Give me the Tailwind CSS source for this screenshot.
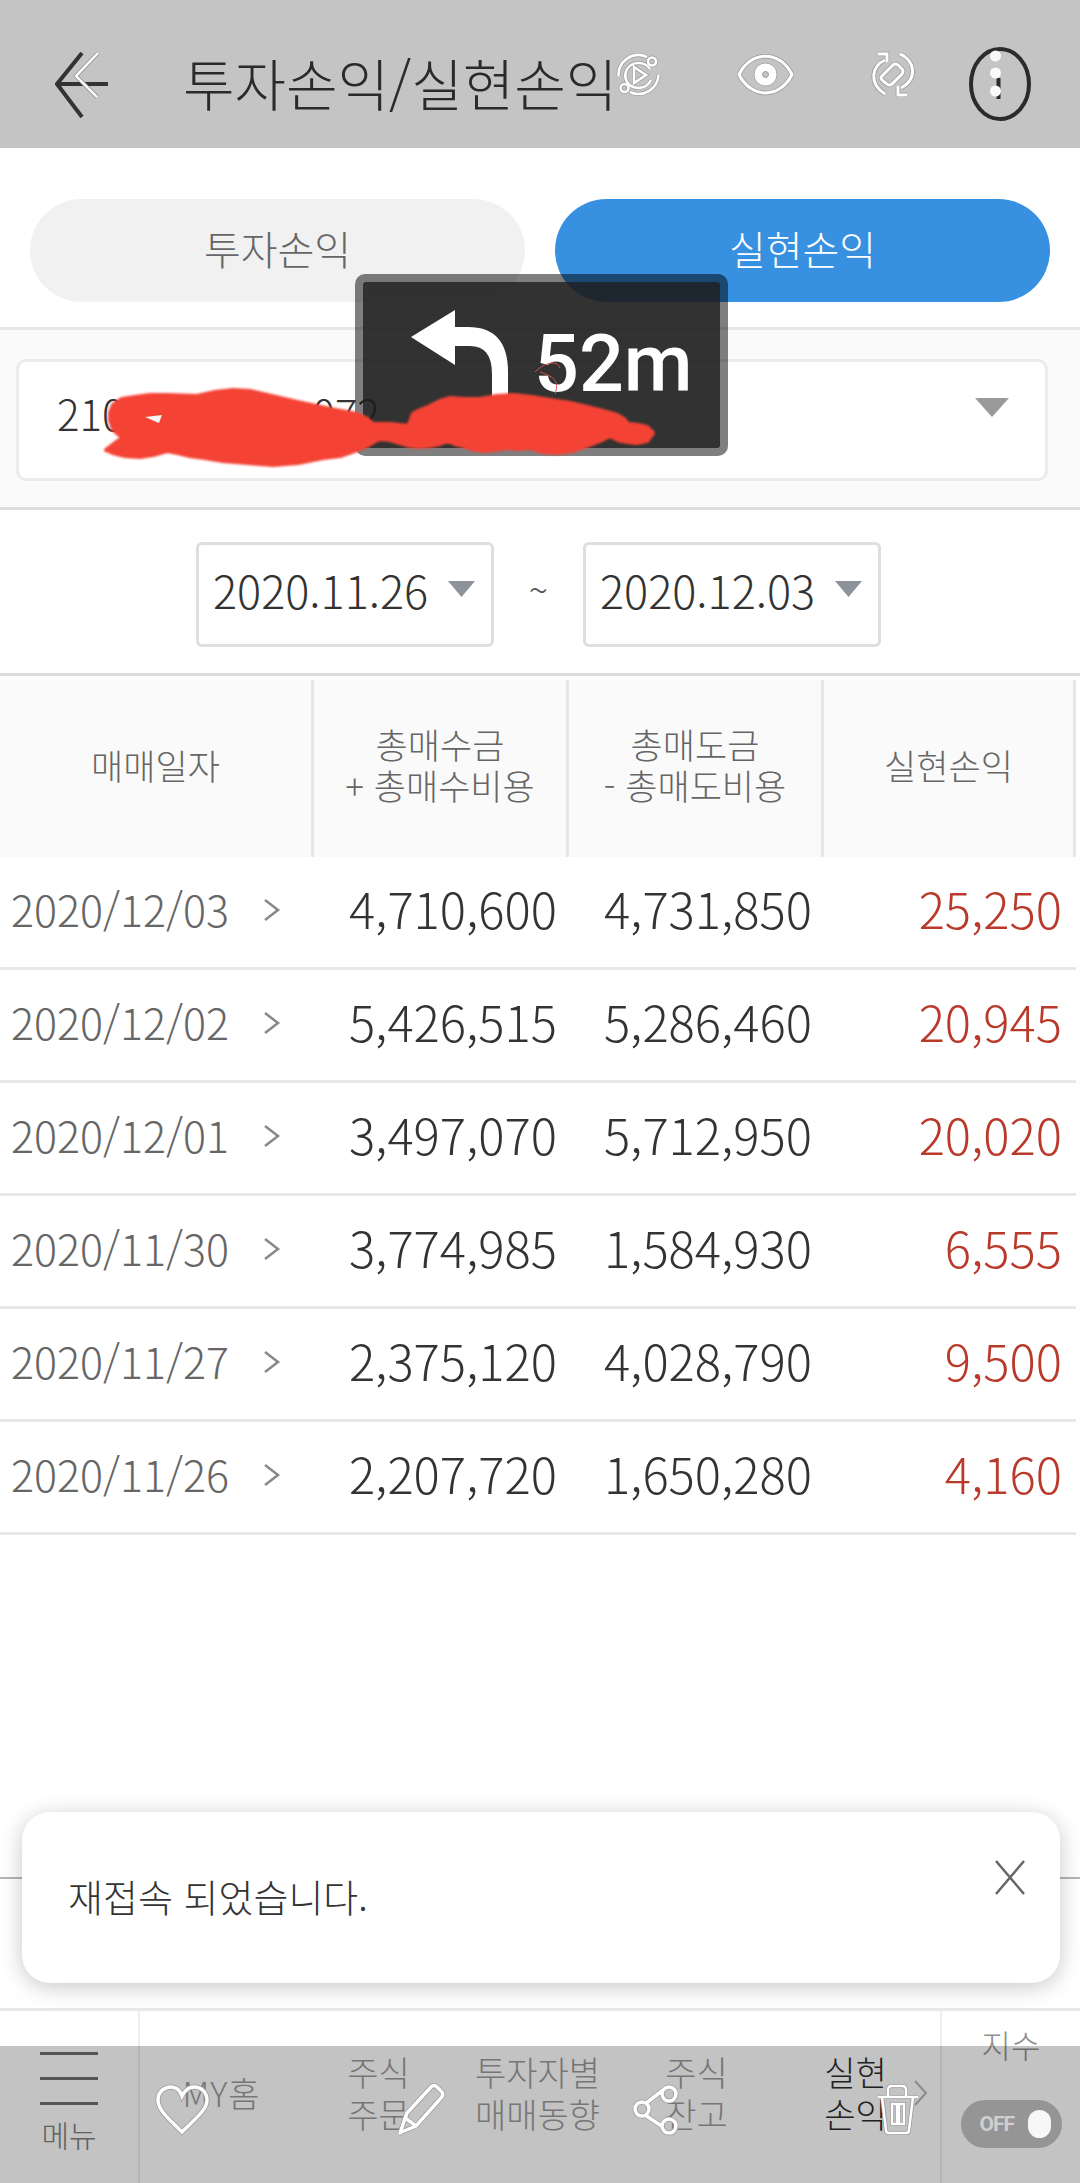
<!DOCTYPE html>
<html lang="ko">
<head>
<meta charset="utf-8">
<script src="https://cdn.jsdelivr.net/npm/@tailwindcss/browser@4"></script>
<title>투자손익/실현손익</title>
</head>
<body class="m-0">
<div class="relative w-[1080px] h-[2183px] overflow-hidden bg-white flex flex-col font-['Noto_Sans_CJK_KR','Noto_Sans',sans-serif] font-light">

  <!-- header -->
  <header class="h-[148px] shrink-0 bg-[#c4c4c4] flex items-start">
    <svg class="ml-[55px] mt-[52px] shrink-0" width="54" height="66" viewBox="55 52 54 66" fill="none">
      <path d="M82 53 L57 84 L82 117 M57 84 H108" stroke="#333" stroke-width="4"/>
      <path d="M98 53 L76 76 L97 97" stroke="#999" stroke-width="4"/>
      <path d="M98 53 L76 76 L97 97" stroke="#fff" stroke-width="2.4"/>
    </svg>
    <h1 class="ml-[74px] mt-[48px] w-[429px] shrink-0 text-[56px] leading-[68px] text-[#2a2a2a] whitespace-nowrap font-light">투자손익/실현손익</h1>
    <svg class="ml-[4px] mt-[52px] shrink-0" width="45" height="45" viewBox="0 0 45 45" fill="none">
      <defs><g id="ic-play"><path d="M2.5 24 A20 20 0 0 1 31 5"/><circle cx="36" cy="9.500" r="4"/><path d="M42.500 23 A20 20 0 0 1 14 40"/><circle cx="8.500" cy="36" r="4"/><path d="M11 17 A14 14 0 0 1 34 17 M35 28 A14 14 0 0 1 11 30 A14 14 0 0 1 11 17"/><path d="M18 15 L30 23 L18 31 Z"/></g></defs>
      <use href="#ic-play" stroke="#999" stroke-width="4"/><use href="#ic-play" stroke="#fff" stroke-width="2.600"/>
    </svg>
    <svg class="ml-[76px] mt-[53px] shrink-0" width="57" height="43" viewBox="0 0 57 43" fill="none">
      <defs><g id="ic-eye"><path d="M2 21.500 C14 -3 43 -3 55 21.500 C43 46 14 46 2 21.500 Z"/></g></defs>
      <use href="#ic-eye" stroke="#999" stroke-width="4.500"/><use href="#ic-eye" stroke="#fff" stroke-width="3"/>
      <circle cx="28.500" cy="21.500" r="11.500" fill="#fff" stroke="#aaa"/>
      <circle cx="28.500" cy="21.500" r="3" fill="#c4c4c4" stroke="#999"/>
    </svg>
    <svg class="ml-[75px] mt-[51px] shrink-0" width="47" height="46" viewBox="0 0 47 46" fill="none">
      <defs><g id="ic-rot"><path d="M16 9 C3 15 -1 32 16 43"/><path d="M9 3 H18 V11"/><path d="M31 3 C46 9 49 28 32 37"/><path d="M38 44 H29 V35"/><path d="M13 25 L24 14 Q26 12 29 14 L33 18 Q35 20 33 23 L23 33 Q20 35 18 33 L13 29 Q11 27 13 25 Z"/></g></defs>
      <use href="#ic-rot" stroke="#999" stroke-width="4.500"/><use href="#ic-rot" stroke="#fff" stroke-width="3"/>
    </svg>
    <svg class="ml-[52px] mt-[46px] shrink-0" width="64" height="76" viewBox="0 0 64 76" fill="none">
      <ellipse cx="32" cy="38" rx="29" ry="35" stroke="#2b2b2b" stroke-width="4"/>
      <path d="M30.500 32 V53" stroke="#2b2b2b" stroke-width="4"/>
      <circle cx="27.500" cy="10" r="5.500" fill="#fafafa"/><circle cx="27.500" cy="27" r="5.500" fill="#fafafa"/><circle cx="27.500" cy="45" r="5.500" fill="#fafafa"/>
    </svg>
  </header>

  <!-- tabs -->
  <section class="h-[179px] shrink-0 pt-[51px] pl-[30px] flex gap-[30px]">
    <div class="w-[495px] h-[103px] rounded-full bg-[#f1f1f1] text-[#666] text-[40px] leading-[56px] flex items-center justify-center pb-[5px]">투자손익</div>
    <div class="w-[495px] h-[103px] rounded-full bg-[#3790e0] text-white text-[40px] leading-[56px] flex items-center justify-center pb-[5px]">실현손익</div>
  </section>

  <!-- account -->
  <section class="h-[180px] shrink-0 border-t-[3px] border-[#e6e6e6] bg-[#fafafa] pt-[29px] px-[16px]">
    <div class="h-[122px] w-[1032px] rounded-[10px] border-[3px] border-[#ebebeb] bg-white flex items-center pl-[38px] pr-[36px] text-[#333] text-[42px] leading-[56px]">
      <span class="mb-[14px]">210</span><span class="ml-[188px] mb-[14px]">072</span>
      <svg class="ml-auto mb-[26px]" width="34" height="19" viewBox="0 0 34 19"><path d="M0 0 H34 L17 19 Z" fill="#9a9a9a"/></svg>
    </div>
  </section>

  <!-- dates -->
  <section class="h-[166px] shrink-0 border-t-[3px] border-[#dcdcdc] flex items-start pl-[196px] pt-[32px]">
    <div class="w-[298px] h-[105px] rounded-[6px] border-[3px] border-[#dedede] flex items-center pl-[14px] text-[45px] leading-[60px] text-[#333] pb-[10px]">
      <span class="shrink-0 whitespace-nowrap">2020.11.26</span>
      <svg class="ml-[20px] mb-[2px] shrink-0" width="27" height="16" viewBox="0 0 27 16"><path d="M0 0 H27 L13.500 16 Z" fill="#8d929b"/></svg>
    </div>
    <div class="w-[89px] h-[105px] flex items-center justify-center text-[36px] text-[#555] pb-[14px]">~</div>
    <div class="w-[298px] h-[105px] rounded-[6px] border-[3px] border-[#dedede] flex items-center pl-[14px] text-[45px] leading-[60px] text-[#333] pb-[10px]">
      <span class="shrink-0 whitespace-nowrap">2020.12.03</span>
      <svg class="ml-[20px] mb-[2px] shrink-0" width="27" height="16" viewBox="0 0 27 16"><path d="M0 0 H27 L13.500 16 Z" fill="#8d929b"/></svg>
    </div>
  </section>

  <!-- table -->
  <section class="shrink-0 border-t-[3px] border-[#dcdcdc] pt-[4px] w-full">
    <div class="h-[177px] flex w-[1076px] bg-[#fafafa] text-[35px] leading-[41px] text-[#666] text-center">
      <div class="w-[314px] border-r-[3px] border-[#e6e6e6] flex items-center justify-center pb-[9px]">매매일자</div>
      <div class="w-[255px] border-r-[3px] border-[#e6e6e6] flex items-center justify-center pb-[10px]"><span class="whitespace-nowrap">총매수금<br>+ 총매수비용</span></div>
      <div class="w-[255px] border-r-[3px] border-[#e6e6e6] flex items-center justify-center pb-[10px]"><span class="whitespace-nowrap">총매도금<br>- 총매도비용</span></div>
      <div class="w-[252px] border-r-[3px] border-[#e6e6e6] flex items-center justify-center pb-[9px]">실현손익</div>
    </div>

    <div class="w-[1076px] h-[113px] border-b-[3px] border-[#e8e8e8] flex items-center pb-[8px] text-[49px] leading-[66px] text-[#333]">
      <div class="w-[314px] pl-[11px] flex items-center text-[43px] leading-[60px] text-[#666]"><span>2020/12/03</span><svg class="ml-[33px] mt-[4px]" width="19" height="26" viewBox="0 0 19 26" fill="none"><path d="M3 3 L16 13 L3 23" stroke="#888" stroke-width="2.500"/></svg></div>
      <div class="w-[243px] text-right">4,710,600</div>
      <div class="w-[255px] text-right">4,731,850</div>
      <div class="w-[250px] text-right text-[#b93a2b]">25,250</div>
    </div>
    <div class="w-[1076px] h-[113px] border-b-[3px] border-[#e8e8e8] flex items-center pb-[8px] text-[49px] leading-[66px] text-[#333]">
      <div class="w-[314px] pl-[11px] flex items-center text-[43px] leading-[60px] text-[#666]"><span>2020/12/02</span><svg class="ml-[33px] mt-[4px]" width="19" height="26" viewBox="0 0 19 26" fill="none"><path d="M3 3 L16 13 L3 23" stroke="#888" stroke-width="2.500"/></svg></div>
      <div class="w-[243px] text-right">5,426,515</div>
      <div class="w-[255px] text-right">5,286,460</div>
      <div class="w-[250px] text-right text-[#b93a2b]">20,945</div>
    </div>
    <div class="w-[1076px] h-[113px] border-b-[3px] border-[#e8e8e8] flex items-center pb-[8px] text-[49px] leading-[66px] text-[#333]">
      <div class="w-[314px] pl-[11px] flex items-center text-[43px] leading-[60px] text-[#666]"><span>2020/12/01</span><svg class="ml-[33px] mt-[4px]" width="19" height="26" viewBox="0 0 19 26" fill="none"><path d="M3 3 L16 13 L3 23" stroke="#888" stroke-width="2.500"/></svg></div>
      <div class="w-[243px] text-right">3,497,070</div>
      <div class="w-[255px] text-right">5,712,950</div>
      <div class="w-[250px] text-right text-[#b93a2b]">20,020</div>
    </div>
    <div class="w-[1076px] h-[113px] border-b-[3px] border-[#e8e8e8] flex items-center pb-[8px] text-[49px] leading-[66px] text-[#333]">
      <div class="w-[314px] pl-[11px] flex items-center text-[43px] leading-[60px] text-[#666]"><span>2020/11/30</span><svg class="ml-[33px] mt-[4px]" width="19" height="26" viewBox="0 0 19 26" fill="none"><path d="M3 3 L16 13 L3 23" stroke="#888" stroke-width="2.500"/></svg></div>
      <div class="w-[243px] text-right">3,774,985</div>
      <div class="w-[255px] text-right">1,584,930</div>
      <div class="w-[250px] text-right text-[#b93a2b]">6,555</div>
    </div>
    <div class="w-[1076px] h-[113px] border-b-[3px] border-[#e8e8e8] flex items-center pb-[8px] text-[49px] leading-[66px] text-[#333]">
      <div class="w-[314px] pl-[11px] flex items-center text-[43px] leading-[60px] text-[#666]"><span>2020/11/27</span><svg class="ml-[33px] mt-[4px]" width="19" height="26" viewBox="0 0 19 26" fill="none"><path d="M3 3 L16 13 L3 23" stroke="#888" stroke-width="2.500"/></svg></div>
      <div class="w-[243px] text-right">2,375,120</div>
      <div class="w-[255px] text-right">4,028,790</div>
      <div class="w-[250px] text-right text-[#b93a2b]">9,500</div>
    </div>
    <div class="w-[1076px] h-[113px] border-b-[3px] border-[#e8e8e8] flex items-center pb-[8px] text-[49px] leading-[66px] text-[#333]">
      <div class="w-[314px] pl-[11px] flex items-center text-[43px] leading-[60px] text-[#666]"><span>2020/11/26</span><svg class="ml-[33px] mt-[4px]" width="19" height="26" viewBox="0 0 19 26" fill="none"><path d="M3 3 L16 13 L3 23" stroke="#888" stroke-width="2.500"/></svg></div>
      <div class="w-[243px] text-right">2,207,720</div>
      <div class="w-[255px] text-right">1,650,280</div>
      <div class="w-[250px] text-right text-[#b93a2b]">4,160</div>
    </div>
  </section>

  <div class="flex-1"></div>

  <!-- thin rule behind the toast -->
  <div class="h-[131px] shrink-0 border-t-[2px] border-[#b5b5b5]"></div>

  <!-- bottom navigation -->
  <nav class="h-[175px] shrink-0 border-t-[3px] border-[#e8e8e8] flex text-[#9b9b9b] text-[34px] leading-[42px] text-center">
    <div class="w-[140px] shrink-0 border-r-[2px] border-[#eeeeee] flex flex-col items-center pt-[41px]">
      <span class="block w-[58px] h-[3px] bg-[#6f6f6f]"></span>
      <span class="block w-[58px] h-[3px] bg-[#6f6f6f] mt-[22px]"></span>
      <span class="block w-[58px] h-[3px] bg-[#6f6f6f] mt-[22px]"></span>
      <span class="text-[30px] leading-[36px] text-[#808080] mt-[11px]">메뉴</span>
    </div>
    <div class="w-[159px] shrink-0 flex items-center justify-center pb-[8px]"><span class="tracking-[1px] ml-[4px]">MY홈</span></div>
    <div class="w-[159px] shrink-0 flex items-center justify-center pb-[8px]"><span>주식<br>주문</span></div>
    <div class="w-[159px] shrink-0 flex items-center justify-center pb-[8px]"><span>투자자별<br>매매동향</span></div>
    <div class="w-[159px] shrink-0 flex items-center justify-center pb-[8px]"><span>주식<br>잔고</span></div>
    <div class="w-[164px] shrink-0 flex items-center justify-center pb-[8px] pr-[5px] text-[#2c2c2c]"><span>실현<br>손익</span></div>
    <div class="flex-1 border-l-[2px] border-[#eeeeee] flex flex-col items-center pt-[15px]">
      <span class="text-[32px] leading-[36px] text-[#8f8f8f]">지수</span>
      <div class="relative z-10 mt-[38px] w-[101px] h-[48px] rounded-full bg-[#959595] flex items-center pl-[19px] font-['Roboto',sans-serif] font-bold text-[21px] tracking-[-1px] text-[#cfcfcf]">
        OFF
        <span class="absolute right-[11px] top-[10px] w-[23px] h-[28px] rounded-full bg-[#f7f7f7]"></span>
      </div>
    </div>
  </nav>

  <!-- system tint over the bottom bar -->
  <div class="absolute left-0 bottom-0 w-full h-[137px] bg-black/[.235]"></div>

  <!-- navigation-app floating widget -->
  <div class="absolute left-[355px] top-[274px] w-[373px] h-[182px] rounded-[10px] border-[8px] border-black/50 bg-[#1c1c1c]/90 bg-clip-padding">
    <svg class="absolute left-[48px] top-[28px]" width="110" height="100" viewBox="411 310 110 100"><path d="M411 337 L455 310 V327 H468 Q508 327 508 372 V402 H492 V374 Q492 346 470 346 H455 V365 Z" fill="#fff"/></svg>
    <span class="absolute left-[171px] top-[37px] font-['Roboto',sans-serif] font-medium text-[79px] leading-[90px] text-white whitespace-nowrap">52m</span>
  </div>

  <!-- red hand-drawn redaction and floating icons over the bottom bar -->
  <svg class="absolute inset-0" width="1080" height="2183" viewBox="0 0 1080 2183" fill="none">
    <defs><filter id="soft"><feGaussianBlur stdDeviation="0.8"/></filter></defs>
    <path filter="url(#soft)" fill="#f44336" stroke="#f44336" stroke-width="4" stroke-linejoin="round" d="M110 413 L113 405 L122 399 L135 397 L150 395 L167 395 L197 396 L215 392 L233 390 L250 391 L263 394 L297 402 L330 409 L357 414 L366 418 L373 424 L380 424 L390 424 L400 425 L408 426 L411 420 L413 414 L420 410 L428 407 L440 401 L450 398 L465 399 L480 399 L497 396 L513 395 L532 397 L550 400 L570 403 L587 407 L603 411 L617 415 L624 419 L628 424 L638 425 L647 427 L653 433 L647 441 L637 443 L627 442 L618 440 L610 436 L600 441 L587 446 L572 451 L557 453 L543 452 L530 448 L518 449 L507 448 L495 450 L483 451 L472 449 L463 446 L455 444 L447 441 L440 444 L430 446 L420 447 L410 446 L400 443 L390 440 L380 439 L377 440 L367 446 L357 450 L340 456 L323 458 L298 463 L273 465 L248 463 L223 461 L205 458 L190 456 L178 453 L167 451 L153 455 L140 457 L125 456 L113 453 L106 450 L115 443 L123 438 L118 434 L113 429 L110 420 Z"/>
    <path d="M145 417 L162 415 L159 423 Z" fill="#f5f5f5"/>
    <path d="M535 372 C545 362 557 360 560 368 M540 372 C552 376 560 380 555 394" stroke="#e05050" stroke-width="1"/>

    <defs>
      <g id="ic-heart"><path d="M182 2132 C168 2118 158 2110 158 2100 C158 2091 165 2087 171 2087 C176 2087 180 2090 182 2096 C185 2090 189 2087 194 2087 C201 2087 207 2092 207 2100 C207 2110 196 2118 182 2132 Z"/></g>
      <g id="ic-pencil"><path d="M400 2133 L407 2113 L431 2087 Q434 2084 437 2087 L442 2092 Q444 2095 441 2098 L416 2126 L399 2133 Z"/><path d="M404 2117 L416 2126"/></g>
      <g id="ic-share"><path d="M645 2104 L663 2090 M645 2115 L663 2127"/><circle cx="669" cy="2094" r="7"/><circle cx="642" cy="2109" r="7"/><circle cx="669" cy="2126" r="7"/></g>
      <g id="ic-trash"><path d="M878 2097 H918 M888 2097 V2090 Q888 2086 892 2086 H902 Q906 2086 906 2090 V2097 M882 2097 L886 2130 Q886 2133 889 2133 H906 Q909 2133 909 2130 L913 2097 Z M892 2104 V2124 H897 V2104 Z M899 2104 V2124 H904 V2104 Z"/></g>
    </defs>
    <path d="M915 2081 L926 2093 L915 2105" stroke="#8a8a8a" stroke-width="2"/>
    <use href="#ic-heart" stroke="#999" stroke-width="5"/><use href="#ic-heart" stroke="#fff" stroke-width="3.500"/>
    <use href="#ic-pencil" stroke="#999" stroke-width="5"/><use href="#ic-pencil" stroke="#fff" stroke-width="3.500"/>
    <use href="#ic-share" stroke="#999" stroke-width="5"/><use href="#ic-share" stroke="#fff" stroke-width="3.500"/>
    <use href="#ic-trash" stroke="#999" stroke-width="4"/><use href="#ic-trash" stroke="#fff" stroke-width="2.500"/>
  </svg>

  <!-- toast -->
  <div class="absolute left-[22px] top-[1812px] w-[1038px] h-[171px] rounded-[28px] bg-white shadow-[0_4px_22px_rgba(0,0,0,0.22)] flex items-center pl-[46px] pb-[4px] text-[38px] text-[#333]">
    재접속 되었습니다.
    <svg class="absolute left-[972px] top-[47px]" width="32" height="37" viewBox="0 0 32 37" fill="none"><path d="M2 2 L30 35 M30 2 L2 35" stroke="#666" stroke-width="2.500"/></svg>
  </div>
</div>
</body>
</html>
